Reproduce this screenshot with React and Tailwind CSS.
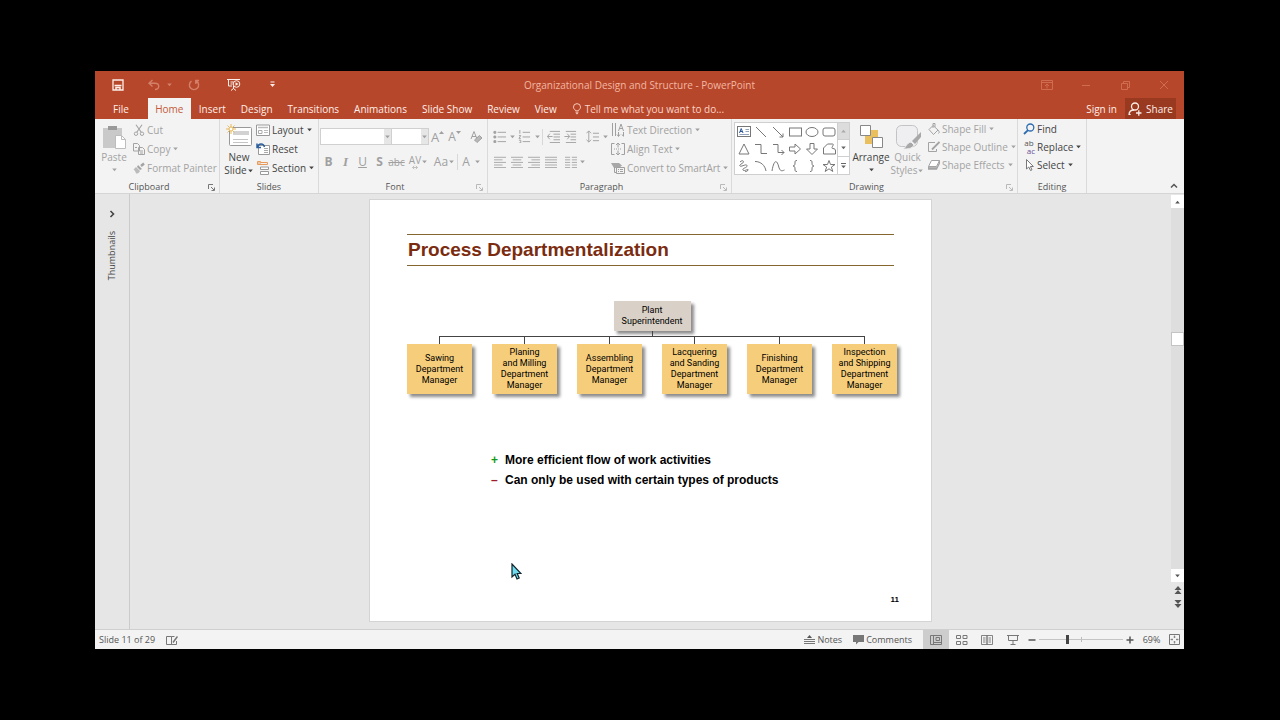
import React, { useState } from "react";
import clsx from "clsx";

const tabs = ["Insert", "Design", "Transitions", "Animations", "Slide Show", "Review", "View"];

const departments = [
  ["Sawing", "Department", "Manager"],
  ["Planing", "and Milling", "Department", "Manager"],
  ["Assembling", "Department", "Manager"],
  ["Lacquering", "and Sanding", "Department", "Manager"],
  ["Finishing", "Department", "Manager"],
  ["Inspection", "and Shipping", "Department", "Manager"],
];

const shapes = [
  ["Text box", <g key="s"><rect x="1.5" y="2.5" width="13" height="10" /><path d="M9.500 5.500h3.500M9.500 7.500h3.500M3.500 10.500h9.500" stroke="#8fa3bd" /><path d="M3.500 9l1.700-4.500L7 9M4 7.500h2.500" stroke="#2b579a" /></g>],
  ["Line", <path key="s" d="M3 3l10 10" />],
  ["Arrow", <path key="s" d="M3 3l10 10M13 9.500V13H9.500" />],
  ["Rectangle", <rect key="s" x="2.500" y="4" width="12" height="8" />],
  ["Oval", <ellipse key="s" cx="8" cy="8" rx="6" ry="4.500" />],
  ["Rounded rectangle", <rect key="s" x="2" y="4" width="12" height="8" rx="2" />],
  ["Triangle", <path key="s" d="M8 3l5 10H3z" />],
  ["Elbow connector", <path key="s" d="M2 3.500h6v9h6" />],
  ["Elbow arrow", <path key="s" d="M3 3.500h5v8h6M11.500 9l2.500 2.500-2.500 2.500" />],
  ["Right arrow", <path key="s" d="M2.500 6h5.500V3l5.500 5-5.500 5v-3H2.500z" />],
  ["Down arrow", <path key="s" d="M6 2.500h4V8h3.500L8 13.500 2.500 8H6z" />],
  ["Freeform", <path key="s" d="M2.500 13V7l4-4h5c2.500 0-2 4 0 4.500 2.500 0 3 1 3 2.500v3z" />],
  ["Scribble", <path key="s" d="M4 4c3-3 5 0 2 1.500S3 9 6 8s5-2 5 0-5 2-4 4 6-2 5 0-2 1.500-3 1.500" />],
  ["Arc", <path key="s" d="M2 3.500c6 0 10 4 11 9.500" />],
  ["Curve", <path key="s" d="M2 13C4 1 7 2 8.500 8S12 13 14.500 12" />],
  ["Left brace", <path key="s" d="M10 2.500c-2 0-2 .5-2 2.500s-.5 3-2 3c1.500 0 2 1 2 3s0 2.500 2 2.500" />],
  ["Right brace", <path key="s" d="M6 2.500c2 0 2 .5 2 2.500s.5 3 2 3c-1.500 0-2 1-2 3s0 2.500-2 2.500" />],
  ["Star", <path key="s" d="M8 2.500l1.500 4h4.500l-3.600 2.600 1.400 4.400L8 10.800l-3.800 2.700 1.400-4.400L2 6.500h4.500z" />],
];

function Icon({ children, className = "size-4", box = 16 }) {
  return (
    <svg viewBox={`0 0 ${box} ${box}`} className={clsx("shrink-0", className)} fill="none" stroke="currentColor" aria-hidden="true">
      {children}
    </svg>
  );
}

function Caret({ className = "w-[7px]" }) {
  return (
    <svg viewBox="0 0 7 4" className={clsx("h-1 shrink-0", className)} aria-hidden="true">
      <path d="M1.200 .5h4.600L3.500 3.300z" fill="currentColor" />
    </svg>
  );
}

function Separator() {
  return <span className="h-4 w-px shrink-0 bg-[#d8d8d8]" />;
}

// one small square command, optionally followed by its own drop-down arrow
function Tool({ label, drop, className = "w-[17px]", children }) {
  return (
    <button aria-label={label} className={clsx("flex h-[18px] shrink-0 items-center justify-center", className)}>
      {children}
      {drop && <Caret />}
    </button>
  );
}

function Row({ icon, label, drop, className = "h-[19px]" }) {
  return (
    <button className={clsx("flex items-center gap-[2px] whitespace-nowrap", className)}>
      {icon}
      <span>{label}</span>
      {drop && <Caret />}
    </button>
  );
}

function Group({ title, launcher, dim, className, children }) {
  return (
    <section aria-label={title} className={clsx("flex shrink-0 flex-col border-r border-[#dadada]", className)}>
      <div className="flex h-[62px] items-start pt-px">{children}</div>
      <div className="flex h-3 items-center text-[9px]">
        <span className="flex-1 text-center text-[#555]">{title}</span>
        {launcher && (
          <button aria-label={`${title} settings`} className={clsx("flex w-4 justify-center", dim ? "text-[#b9b9b9]" : "text-[#777]")}>
            <Icon className="size-[7px]" box={7}>
              <path d="M.5 5V.5H5M3 3l3 3M6.500 3.500v3h-3" />
            </Icon>
          </button>
        )}
      </div>
    </section>
  );
}

function Lines({ d, className = "size-[14px]" }) {
  return (
    <Icon className={className} box={14}>
      <path d={d} />
    </Icon>
  );
}

function TitleBar() {
  return (
    <div className="grid h-[27px] grid-cols-[1fr_auto_1fr] items-center">
      <div className="flex items-center pl-[11px] text-[#fdeee9]">
        <button aria-label="Save" className="mr-3 flex w-6 justify-center">
          <Icon className="size-3" box={12}>
            <path d="M1 1h10v10H1z" strokeWidth="1.300" />
            <path d="M2.500 6.500h7M4 11V8.500h4V11" strokeWidth="1.500" />
          </Icon>
        </button>
        <button aria-label="Undo" className="flex w-6 justify-center text-[#d4816b]">
          <Icon className="size-3" box={12}>
            <path d="M4.500 1L1 4.200l3.500 3.300M1.500 4.200H7c5 0 5 6.300 0 6.300" strokeWidth="1.400" />
          </Icon>
        </button>
        <button aria-label="Undo history" className="mr-[9px] text-[#d4816b]"><Caret /></button>
        <button aria-label="Redo" className="mr-4 flex w-6 justify-center text-[#d4816b]">
          <Icon className="size-3" box={12}>
            <path d="M3.500 2.200a4.600 4.600 0 1 0 5 0M11 1.500H7.800V5" strokeWidth="1.400" />
          </Icon>
        </button>
        <button aria-label="Start from beginning" className="mr-[14px] flex w-6 justify-center">
          <Icon className="size-[14px]" box={14}>
            <path d="M0 1.500h13M1.500 1.500V8H5M6.500 8v3M4 12.500l2.500-2 2.500 2M3.500 4h3M3.500 6h2" />
            <circle cx="9.500" cy="6" r="3.300" />
            <path d="M8.500 4.300L11.500 6l-3 1.700z" fill="currentColor" stroke="none" />
          </Icon>
        </button>
        <button aria-label="Customize toolbar" className="flex w-6 justify-center">
          <Icon className="size-[7px]" box={7}>
            <path d="M1.500 1h4" />
            <path d="M1 3h5L3.500 6z" fill="currentColor" stroke="none" />
          </Icon>
        </button>
      </div>
      <h1 className="text-[#f3b6a3]">Organizational Design and Structure - PowerPoint</h1>
      <div className="flex items-center justify-end gap-[27px] pr-[14px] text-[#cf6c52]">
        <button aria-label="Ribbon display options">
          <Icon className="size-3" box={12}><path d="M.5 1.500h11v9H.5zM.5 3.500h11M6 9.500V5M4 7l2-2 2 2" /></Icon>
        </button>
        <button aria-label="Minimize"><Icon className="size-3" box={12}><path d="M2 6.500h8" /></Icon></button>
        <button aria-label="Restore"><Icon className="size-3" box={12}><path d="M2.500 4.500h6v6h-6zM4.500 4.500v-2h6v6h-2" /></Icon></button>
        <button aria-label="Close"><Icon className="size-3" box={12}><path d="M2 2l8 8M10 2l-8 8" /></Icon></button>
      </div>
    </div>
  );
}

function TabRow() {
  return (
    <div className="flex h-[21px] items-stretch text-[#fdeee9]">
      <nav className="flex gap-px pl-[11px]">
        <button className="mr-[11px] px-[7px]">File</button>
        <button className="w-[43px] bg-[#f3f3f3] text-[#c4593b]">Home</button>
        {tabs.map((tab) => (
          <button key={tab} className="px-[7px]">{tab}</button>
        ))}
      </nav>
      <button className="ml-2 flex items-center gap-[3px] text-[#fad3c7]">
        <Icon className="h-[14px] w-[10px]" box={14}>
          <path d="M5 9.500C5 8 2 7 2 4.500a5 5 0 0 1 10 0C12 7 9 8 9 9.500zM5 11.500h4M5.500 13.500h3" strokeWidth="1.300" />
        </Icon>
        Tell me what you want to do...
      </button>
      <div className="ml-auto flex pr-2">
        <button className="px-2">Sign in</button>
        <button className="flex w-[51px] items-center justify-center gap-1 bg-[#99391f]">
          <Icon className="size-[14px]" box={14}>
            <circle cx="7" cy="4.500" r="3.500" strokeWidth="1.300" />
            <path d="M1 13c0-3.500 2.500-5 5-5M2 13V12M8 11h5.500M10.800 8.300v5.400" strokeWidth="1.300" />
          </Icon>
          Share
        </button>
      </div>
    </div>
  );
}

function ClipboardGroup() {
  return (
    <Group title="Clipboard" launcher className="w-[125px] text-[#a3a3a3]">
      <button className="ml-1 flex w-[30px] flex-col items-center pt-1">
        <Icon className="size-[26px]" box={26}>
          <path d="M2 4h19v20H2z" fill="#c9c9c9" stroke="none" />
          <path d="M7 2h9v4H7z" fill="#9a9a9a" stroke="none" />
          <path d="M14.500 11.500h6l4 4v9h-10z" fill="#fff" stroke="#bdbdbd" />
          <path d="M20.500 11.500v4h4" stroke="#bdbdbd" />
        </Icon>
        <span className="leading-[14px]">Paste</span>
        <Caret className="mt-1 w-[7px]" />
      </button>
      <div className="ml-1 flex flex-col">
        <Row label="Cut" icon={
          <Icon className="size-3"><path d="M4 1l7 10M12 1L5 11" strokeWidth="1.500" /><circle cx="4" cy="13" r="2.300" strokeWidth="1.300" /><circle cx="12" cy="13" r="2.300" strokeWidth="1.300" /></Icon>
        } />
        <Row label="Copy" drop icon={
          <Icon className="size-3" box={12}><path d="M.5.5h4l2 2V8h-6zM5.500 4.500h4l2 2v5h-6z" fill="#f3f3f3" /><path d="M2 4.500h2M7 8h3M7 10h3" /></Icon>
        } />
        <Row label="Format Painter" icon={
          <Icon className="size-3" box={12}><path d="M8 4l3-2.500" strokeWidth="2.500" /><path d="M5 3l4 4-2 1-3-3z" fill="currentColor" stroke="none" /><path d="M3 5l4 4c-1 2-2 2.500-4 2.500C2.500 9.500 2 8.500.5 7.500z" fill="#bbb" stroke="none" /></Icon>
        } />
      </div>
    </Group>
  );
}

function SlidesGroup() {
  return (
    <Group title="Slides" className="w-[99px] text-[#444]">
      <button className="ml-[2px] flex w-[34px] flex-col items-center pt-1">
        <Icon className="size-[26px]" box={26}>
          <rect x="3.500" y="3.500" width="22" height="18" rx="1" fill="#fff" stroke="#999" />
          <path d="M7 7h16v4H7z" fill="#d2d2d2" stroke="none" />
          <path d="M7 15.500h15M7 18.500h15" stroke="#c4c4c4" />
          <path d="M5 0v10M0 5h10M1.500 1.500l7 7M8.500 1.500l-7 7" stroke="#e9b95c" />
          <circle cx="5" cy="5" r="2" fill="#fff" stroke="#e9b95c" />
        </Icon>
        <span className="leading-[14px]">New</span>
        <span className="flex items-center leading-[13px]">Slide<Caret /></span>
      </button>
      <div className="flex flex-col">
        <Row label="Layout" drop icon={
          <Icon className="size-[14px]" box={14}><path d="M.5 2h13v10.500H.5z" fill="#fff" stroke="#999" /><path d="M2 4.500h10" stroke="#bbb" strokeWidth="1.500" /><path d="M2.500 7.500h3.500v3H2.500z" stroke="#aaa" /><path d="M8 7.500h4M8 9.500h4" stroke="#bbb" /></Icon>
        } />
        <Row label="Reset" icon={
          <Icon className="size-[14px]" box={14}><path d="M2.500 3.500h11v9h-11z" fill="#fff" stroke="#999" /><path d="M8 6.500h4M8 8.500h4M8 10.500h4" stroke="#aaa" /><path d="M1.500 5.500C2.500 1 7.500 1 8.500 5M1 1.500v4h4" stroke="#2b5f9e" strokeWidth="1.500" /></Icon>
        } />
        <Row label="Section" drop icon={
          <Icon className="size-[14px]" box={14}><path d="M1.500.500v3h10v-2h-7v-1zM2 2h3" stroke="#e79a5a" /><path d="M4.500 6h8v2.500h-8zM4.500 10.500h8v3h-8z" fill="#fff" stroke="#999" /></Icon>
        } />
      </div>
    </Group>
  );
}

function FontGroup() {
  return (
    <Group title="Font" launcher dim className="w-[169px] text-[#a0a0a0]">
      <div className="flex w-full flex-col gap-2 pl-px pt-2">
        <div className="flex h-[17px] items-center">
          <div className="flex h-[17px] w-[72px] border border-[#d0d0d0]">
            <input aria-label="Font name" className="w-full min-w-0 bg-white" />
            <button aria-label="Font list" className="bg-[#e6e6e6]"><Caret /></button>
          </div>
          <div className="flex h-[17px] w-[37px] border border-l-0 border-[#d0d0d0]">
            <input aria-label="Font size" className="w-full min-w-0 bg-white" />
            <button aria-label="Font size list" className="bg-[#e6e6e6]"><Caret /></button>
          </div>
          <Tool label="Increase font size">
            <span className="text-[13px]">A</span><Icon className="mb-2 size-[5px]" box={5}><path d="M0 4h5L2.500 1z" fill="currentColor" stroke="none" /></Icon>
          </Tool>
          <Tool label="Decrease font size">
            <span className="text-[12px]">A</span><Icon className="mb-2 size-[5px]" box={5}><path d="M0 1h5L2.500 4z" fill="currentColor" stroke="none" /></Icon>
          </Tool>
          <span className="ml-[2px]"><Separator /></span>
          <Tool label="Clear formatting" className="w-[22px]">
            <Icon className="size-[14px]" box={14}>
              <path d="M2 9l3-7.500L8 9M3 6.500h4" />
              <path d="M5.500 10l5-4.500 2.500 2.500-5 4.500z" fill="#b9b9b9" />
            </Icon>
          </Tool>
        </div>
        <div className="flex h-[18px] items-center text-[12px]">
          <Tool label="Bold"><b>B</b></Tool>
          <Tool label="Italic"><i className="font-['Liberation_Serif',serif] text-[13px] font-bold">I</i></Tool>
          <Tool label="Underline"><span className="underline">U</span></Tool>
          <Tool label="Shadow"><b>S</b></Tool>
          <Tool label="Strikethrough"><s className="text-[10px]">abc</s></Tool>
          <Tool label="Character spacing" drop className="w-[27px]">
            <span className="flex flex-col items-center text-[10px] leading-[10px]">
              AV
              <Icon className="h-[5px] w-3" box={12}><path d="M1 6h10M4 2L0 6l4 4M8 2l4 4-4 4" strokeWidth="1.500" /></Icon>
            </span>
          </Tool>
          <Tool label="Change case" drop className="w-[25px]"><span>Aa</span></Tool>
          <Separator />
          <Tool label="Font color" drop className="w-[27px]"><span className="mr-1">A</span></Tool>
        </div>
      </div>
    </Group>
  );
}

function ParagraphGroup() {
  return (
    <Group title="Paragraph" launcher dim className="w-[244px] text-[#a0a0a0]">
      <div className="flex w-[121px] flex-col gap-2 pl-[3px] pt-2">
        <div className="flex h-[17px] items-center">
          <Tool label="Bullets" drop className="w-[26px]">
            <Icon className="mr-[3px] size-[13px]" box={14}><path d="M5 2.500h9M5 7.500h9M5 12.500h9" /><path d="M1 1.500h2v2H1zM1 6.500h2v2H1zM1 11.500h2v2H1z" fill="currentColor" /></Icon>
          </Tool>
          <Tool label="Numbering" drop className="w-[25px]">
            <Icon className="mr-[3px] size-[13px]" box={14}><path d="M5 2.500h8M5 7.500h8M5 12.500h8" /><path d="M2 0v4M1 6h2L1 9h2M1 11h2v3H1" /></Icon>
          </Tool>
          <Separator />
          <Tool label="Decrease indent" className="ml-[2px] w-[17px]">
            <Lines className="size-[13px]" d="M3 1.500h11M7 4.500h7M7 7.500h7M7 10.500h7M3 13.500h11M6 7H.5M3 4L.5 7 3 10" />
          </Tool>
          <Tool label="Increase indent">
            <Lines className="size-[13px]" d="M2 1.500h11M7 4.500h6M7 7.500h6M7 10.500h6M2 13.500h11M.5 7H6M3.500 4L6 7l-2.500 3" />
          </Tool>
          <span className="ml-[2px]"><Separator /></span>
          <Tool label="Line spacing" drop className="ml-1 w-[24px]">
            <Icon className="mr-[3px] size-[13px]" box={14}><path d="M3 1v12M.5 3.500L3 1l2.500 2.500M.5 10.500L3 13l2.500-2.500M7.500 3.500H14M7.500 7.500H14M7.500 11.500H14" /></Icon>
          </Tool>
        </div>
        <div className="flex h-[18px] items-center">
          <Tool label="Align left"><Lines className="size-3" d="M0 1.500h14M0 4.500h10M0 7.500h14M0 10.500h10M0 13.500h14" /></Tool>
          <Tool label="Center"><Lines className="size-3" d="M0 1.500h14M2 4.500h10M0 7.500h14M2 10.500h10M0 13.500h14" /></Tool>
          <Tool label="Align right"><Lines className="size-3" d="M0 1.500h14M4 4.500h10M0 7.500h14M4 10.500h10M0 13.500h14" /></Tool>
          <Tool label="Justify"><Lines className="size-3" d="M0 1.500h14M0 4.500h14M0 7.500h14M0 10.500h14M0 13.500h14" /></Tool>
          <span className="ml-[2px]"><Separator /></span>
          <Tool label="Columns" drop className="ml-[2px] w-[24px]">
            <Lines className="mr-[2px] size-3" d="M0 1.500h6M8 1.500h6M0 4.500h6M8 4.500h6M0 7.500h6M8 7.500h6M0 10.500h6M8 10.500h6M0 13.500h6M8 13.500h6" />
          </Tool>
        </div>
      </div>
      <div className="ml-[2px] flex flex-col">
        <Row label="Text Direction" drop icon={
          <Icon className="size-[14px]" box={14}><path d="M1.500 0v13M4.500 0v13M7.500 9v4M12.500 9v4" /><path d="M7.500 8l2.500-7 2.500 7M8.500 5.500h3.500M6 11.500l1.500 2 1.500-2M11 11.500l1.500 2" /></Icon>
        } />
        <Row label="Align Text" drop icon={
          <Icon className="size-[14px]" box={14}><path d="M3.500 1.500h-3v11h3M10.500 1.500h3v11h-3M7 1v4.500M5 3l2-2 2 2M7 13V8.500M5 11l2 2 2-2" /><path d="M3 7h8" strokeDasharray="1 1" /></Icon>
        } />
        <Row label="Convert to SmartArt" drop icon={
          <Icon className="size-[14px]" box={14}><path d="M0 2h8l3 2.500L8 7H3z" fill="#a8a8a8" stroke="none" /><path d="M5.500 6.500h8v6h-8z" fill="#f3f3f3" /><path d="M7 8.500h1M9 8.500h3M7 10.500h1M9 10.500h3M3.500 6v5.500h2" /></Icon>
        } />
      </div>
    </Group>
  );
}

function DrawingGroup() {
  return (
    <Group title="Drawing" launcher dim className="w-[286px] text-[#a3a3a3]">
      <div className="ml-[2px] mt-[2px] flex border border-[#cfcfcf] bg-white">
        <div className="grid grid-cols-6">
          {shapes.map(([name, drawing]) => (
            <button key={name} aria-label={name} className="flex size-[17px] items-center justify-center text-[#777]">
              <Icon>{drawing}</Icon>
            </button>
          ))}
        </div>
        <div className="grid w-3 grid-rows-3 divide-y divide-[#cfcfcf] border-l border-[#cfcfcf] text-[#666]">
          <button aria-label="Previous shapes" className="flex items-center justify-center bg-[#dcdcdc] text-[#aaa]"><Caret className="w-[7px] rotate-180" /></button>
          <button aria-label="Next shapes" className="flex items-center justify-center"><Caret /></button>
          <button aria-label="More shapes" className="flex flex-col items-center justify-center gap-px"><span className="h-px w-[5px] bg-[#666]" /><Caret /></button>
        </div>
      </div>
      <button className="ml-[2px] flex w-[38px] flex-col items-center pt-1 text-[#444]">
        <Icon className="size-[26px]" box={26}>
          <path d="M7 6h13v14H7z" fill="#eac05e" stroke="none" />
          <path d="M2.500 1.500h10v10h-10zM14.500 13.500h10v10h-10z" fill="#fff" stroke="#888" />
        </Icon>
        <span className="leading-[14px]">Arrange</span>
        <Caret className="mt-1 w-[7px]" />
      </button>
      <button className="flex w-[35px] flex-col items-center pt-1">
        <Icon className="size-[26px]" box={26}>
          <rect x="1.500" y="1.500" width="21" height="21" rx="5" fill="#efeff2" stroke="#c3c3c6" />
          <path d="M26 8l-9 9 3 3 6-7z" fill="#a8a8a8" stroke="none" />
          <path d="M16 18l3 3c-2 4-6 4-11 4 3-1 3-6 8-7z" fill="#a8a8a8" stroke="#efeff2" />
        </Icon>
        <span className="leading-[14px]">Quick</span>
        <span className="flex items-center leading-[13px]">Styles<Caret /></span>
      </button>
      <div className="ml-[3px] flex flex-col">
        <Row label="Shape Fill" drop className="h-[18px]" icon={
          <Icon className="size-3" box={12}><path d="M5 2.500l5 4.500-4.500 4.500-4.500-5zM5 5V.5h2V4M10 7c1.500 1.500 1.500 3 .5 3.500" /></Icon>
        } />
        <Row label="Shape Outline" drop className="h-[18px]" icon={
          <Icon className="size-3" box={12}><path d="M7 1.500H.5v9h8V8" /><path d="M4 8.500L11.500 1" strokeWidth="1.800" /></Icon>
        } />
        <Row label="Shape Effects" drop className="h-[18px]" icon={
          <Icon className="size-3" box={12}><path d="M3.500 1.500h8l-3 6h-8z" fill="#fff" /><path d="M.5 7.500v2.500h8l3-6V1.500M1 9h7.500" strokeWidth="1.300" /></Icon>
        } />
      </div>
    </Group>
  );
}

function EditingGroup() {
  return (
    <Group title="Editing" className="w-[69px] text-[#444]">
      <div className="ml-[5px] flex flex-col">
        <Row label="Find" className="h-[18px]" icon={
          <Icon className="size-3" box={12}><circle cx="7.300" cy="4.500" r="3.500" stroke="#2b6cb0" strokeWidth="1.300" /><path d="M5 7.200L1 11" stroke="#2b6cb0" strokeWidth="1.800" /></Icon>
        } />
        <Row label="Replace" drop className="h-[18px]" icon={
          <span className="flex w-3 flex-col text-[8px] leading-[8px] text-[#555]" aria-hidden="true"><span>ab</span><span className="text-right text-[#6b4f9a]">ac</span></span>
        } />
        <Row label="Select" drop className="h-[18px]" icon={
          <Icon className="size-3" box={12}><path d="M3.500 .5v9.500l2.300-2 1.700 3.500 1.500-.7-1.600-3.300h3z" fill="#fff" stroke="#777" /></Icon>
        } />
      </div>
    </Group>
  );
}

function Ribbon() {
  return (
    <div className="flex h-[75px] border-b border-[#d5d5d5] bg-[#f3f3f3]">
      <ClipboardGroup />
      <SlidesGroup />
      <FontGroup />
      <ParagraphGroup />
      <DrawingGroup />
      <EditingGroup />
      <button aria-label="Collapse the ribbon" className="ml-auto mr-[6px] self-end pb-[3px] text-[#555]">
        <Icon className="size-2" box={8}><path d="M1 5.500l3-3 3 3" strokeWidth="1.500" /></Icon>
      </button>
    </div>
  );
}

function Slide() {
  return (
    <article className="relative flex aspect-[4/3] w-[561px] flex-col bg-white px-[37px] pb-[15px] pt-[34px] font-['Liberation_Sans',Arial,sans-serif] font-bold text-black outline outline-[#d4d4d4]">
      <h2 className="border-y border-[#85662f] pl-px text-[19px] leading-[30px] text-[#7b2c10]">Process Departmentalization</h2>
      <div className="mt-[35px] flex w-[490px] flex-col items-center font-['Roboto',sans-serif] text-[9px] font-normal leading-[11px] text-black">
        <div className="flex h-[30px] w-[77px] flex-col items-center justify-center bg-[#d9d1c7] shadow-[3px_3px_3px_#8c8c8c]">
          <span>Plant</span>
          <span>Superintendent</span>
        </div>
        <div className="h-[5px] w-px bg-[#444]" />
        <div className="h-px w-[426px] bg-[#444]" />
        <div className="grid grid-cols-6 gap-x-5">
          {departments.map((lines) => (
            <div key={lines[0]} className="flex w-[65px] flex-col items-center">
              <div className="h-[7px] w-px bg-[#444]" />
              <div className="flex h-[50px] w-full flex-col items-center justify-center whitespace-nowrap bg-[#f5cd7b] shadow-[3px_3px_3px_#8c8c8c]">
                {lines.map((line) => (
                  <span key={line}>{line}</span>
                ))}
              </div>
            </div>
          ))}
        </div>
      </div>
      <ul className="ml-[84px] mt-14 text-[12px] leading-5">
        <li className="flex"><span className="w-[14px] text-[#159a15]">+</span>More efficient flow of work activities</li>
        <li className="flex"><span className="w-[14px] text-[#a01c2c]">–</span>Can only be used with certain types of products</li>
      </ul>
      <p className="-mr-[5px] mt-auto text-right text-[8px] leading-3">11</p>
      <svg viewBox="0 0 11 17" className="absolute left-[141px] top-[363px] h-[17px] w-[11px]" aria-hidden="true">
        <path d="M1 1v13l3-2.700L6 16l2.200-1L6.200 10.500H10z" fill="#6fdcf0" stroke="#12242c" strokeWidth="1.200" />
      </svg>
    </article>
  );
}

function Workspace() {
  return (
    <div className="flex flex-1 bg-[#e6e6e6]">
      <aside className="flex w-[35px] flex-col items-center border-r border-[#cbcbcb] pt-[15px] text-[#444]">
        <button aria-label="Expand thumbnails">
          <Icon className="size-[10px]" box={10}><path d="M3.500 2l3 3-3 3" strokeWidth="1.600" /></Icon>
        </button>
        <span className="mt-3 rotate-180 text-[9px] [writing-mode:vertical-rl]">Thumbnails</span>
      </aside>
      <main className="flex flex-1 items-start justify-center pt-[6px]">
        <Slide />
      </main>
      <div className="flex w-[13px] flex-col items-center pt-px text-[#555]">
        <button aria-label="Scroll up" className="flex h-[13px] w-[13px] items-center justify-center bg-white"><Caret className="w-[7px] rotate-180" /></button>
        <div className="flex w-[13px] flex-1 flex-col bg-[#dedede]">
          <div className="flex-[5]" />
          <div className="h-[14px] border border-[#c4c4c4] bg-white" />
          <div className="flex-[9]" />
        </div>
        <button aria-label="Scroll down" className="flex h-[13px] w-[13px] items-center justify-center bg-white"><Caret /></button>
        <button aria-label="Previous slide" className="mt-1">
          <Icon className="size-2" box={8}><path d="M0.500 4h7L4 0zM.5 8h7L4 4z" fill="currentColor" stroke="none" /></Icon>
        </button>
        <button aria-label="Next slide" className="mb-[21px] mt-[6px]">
          <Icon className="size-2" box={8}><path d="M0.500 0h7L4 4zM.5 4h7L4 8z" fill="currentColor" stroke="none" /></Icon>
        </button>
      </div>
    </div>
  );
}

function StatusBar() {
  const [zoom, setZoom] = useState(69);

  return (
    <footer className="flex h-5 items-stretch border-t border-[#cfcfcf] bg-[#f3f3f3] text-[9px] text-[#555]">
      <span className="flex items-center pl-1">Slide 11 of 29</span>
      <button aria-label="Spelling" className="ml-[11px] text-[#777]">
        <Icon className="size-3" box={12}><path d="M5.500 2.500v8.500M5.500 2.500H.5v8h5M5.500 2.500h3M5.500 10.500h5V7" /><path d="M7 8.500l4.500-6" strokeWidth="1.500" /></Icon>
      </button>
      <div className="ml-auto flex items-stretch">
        <button className="mr-[11px] flex items-center gap-[2px]">
          <Icon className="size-[11px]" box={11}><path d="M0 5.500h11M0 7.500h11M0 9.500h11" strokeWidth=".8" /><path d="M3 4h5L5.500 1z" fill="currentColor" stroke="none" /></Icon>
          Notes
        </button>
        <button className="mr-[11px] flex items-center gap-[2px]">
          <Icon className="size-[11px]" box={11}><path d="M0 1h11v7H5.500L3 10.500V8H0z" fill="#777" stroke="none" /></Icon>
          Comments
        </button>
        <div className="flex text-[#777]">
          <button aria-label="Normal view" className="flex w-[26px] items-center justify-center bg-[#cdcdcd]">
            <Icon className="size-3" box={12}><path d="M.5 1.500h11v9H.5zM3.500 1.500v9M3.500 8.500h8M6 3.500h3.500v3H6z" /></Icon>
          </button>
          <button aria-label="Slide sorter" className="flex w-[25px] items-center justify-center">
            <Icon className="size-3" box={12}><path d="M.5 1.500h4v3h-4zM7 1.500h4v3H7zM.5 7.500h4v3h-4zM7 7.500h4v3H7z" /></Icon>
          </button>
          <button aria-label="Reading view" className="flex w-[26px] items-center justify-center">
            <Icon className="size-3" box={12}><path d="M.5 1.500H6v9H.5zM6 1.500h5.500v9H6zM2 4h2.500M2 6h2.500M2 8h2.500M7.500 4H10M7.500 6H10M7.500 8H10" strokeWidth=".9" /></Icon>
          </button>
          <button aria-label="Slide show" className="flex w-[25px] items-center justify-center">
            <Icon className="size-3" box={12}><path d="M0 1.500h12M1.500 1.500v5h9v-5M6 6.500V10M3.500 10.500h5" /></Icon>
          </button>
        </div>
        <button aria-label="Zoom out" className="ml-[3px] flex items-center" onClick={() => setZoom(zoom - 1)}>
          <Icon className="size-2" box={8}><path d="M.5 4h7" strokeWidth="1.500" /></Icon>
        </button>
        <div className="relative mx-[3px] flex w-[84px] items-center">
          <span className="absolute left-1/2 h-[5px] w-px bg-[#bbb]" />
          <input
            type="range"
            aria-label="Zoom"
            min="10"
            max="190"
            value={zoom}
            onChange={(e) => setZoom(Number(e.target.value))}
            className="relative h-3 w-full appearance-none bg-transparent [&::-webkit-slider-runnable-track]:h-px [&::-webkit-slider-runnable-track]:bg-[#c4c4c4] [&::-webkit-slider-thumb]:-mt-1 [&::-webkit-slider-thumb]:h-[9px] [&::-webkit-slider-thumb]:w-[3px] [&::-webkit-slider-thumb]:appearance-none [&::-webkit-slider-thumb]:bg-[#444]"
          />
        </div>
        <button aria-label="Zoom in" className="flex items-center" onClick={() => setZoom(zoom + 1)}>
          <Icon className="size-2" box={8}><path d="M.5 4h7M4 .5v7" strokeWidth="1.500" /></Icon>
        </button>
        <span className="flex w-[35px] items-center justify-center">{zoom}%</span>
        <button aria-label="Fit slide to window" className="mr-1 flex items-center text-[#777]">
          <Icon className="size-[11px]" box={11}><path d="M.5.5h10v10H.5z" /><path d="M5.500 1.500v2.500M4.500 3h2M5.500 9.500V7M4.500 8h2M1.500 5.500H4M3 4.500v2M9.500 5.500H7M8 4.500v2" strokeWidth=".8" /></Icon>
        </button>
      </div>
    </footer>
  );
}

export default function App() {
  return (
    <div className="flex min-h-screen flex-col bg-black py-[71px] pl-[95px] pr-24 font-['Open_Sans','Noto_Sans',sans-serif] text-[10px] leading-3">
      <div className="flex flex-1 flex-col">
        <header className="bg-[#b7472a]">
          <TitleBar />
          <TabRow />
        </header>
        <Ribbon />
        <Workspace />
        <StatusBar />
      </div>
    </div>
  );
}
